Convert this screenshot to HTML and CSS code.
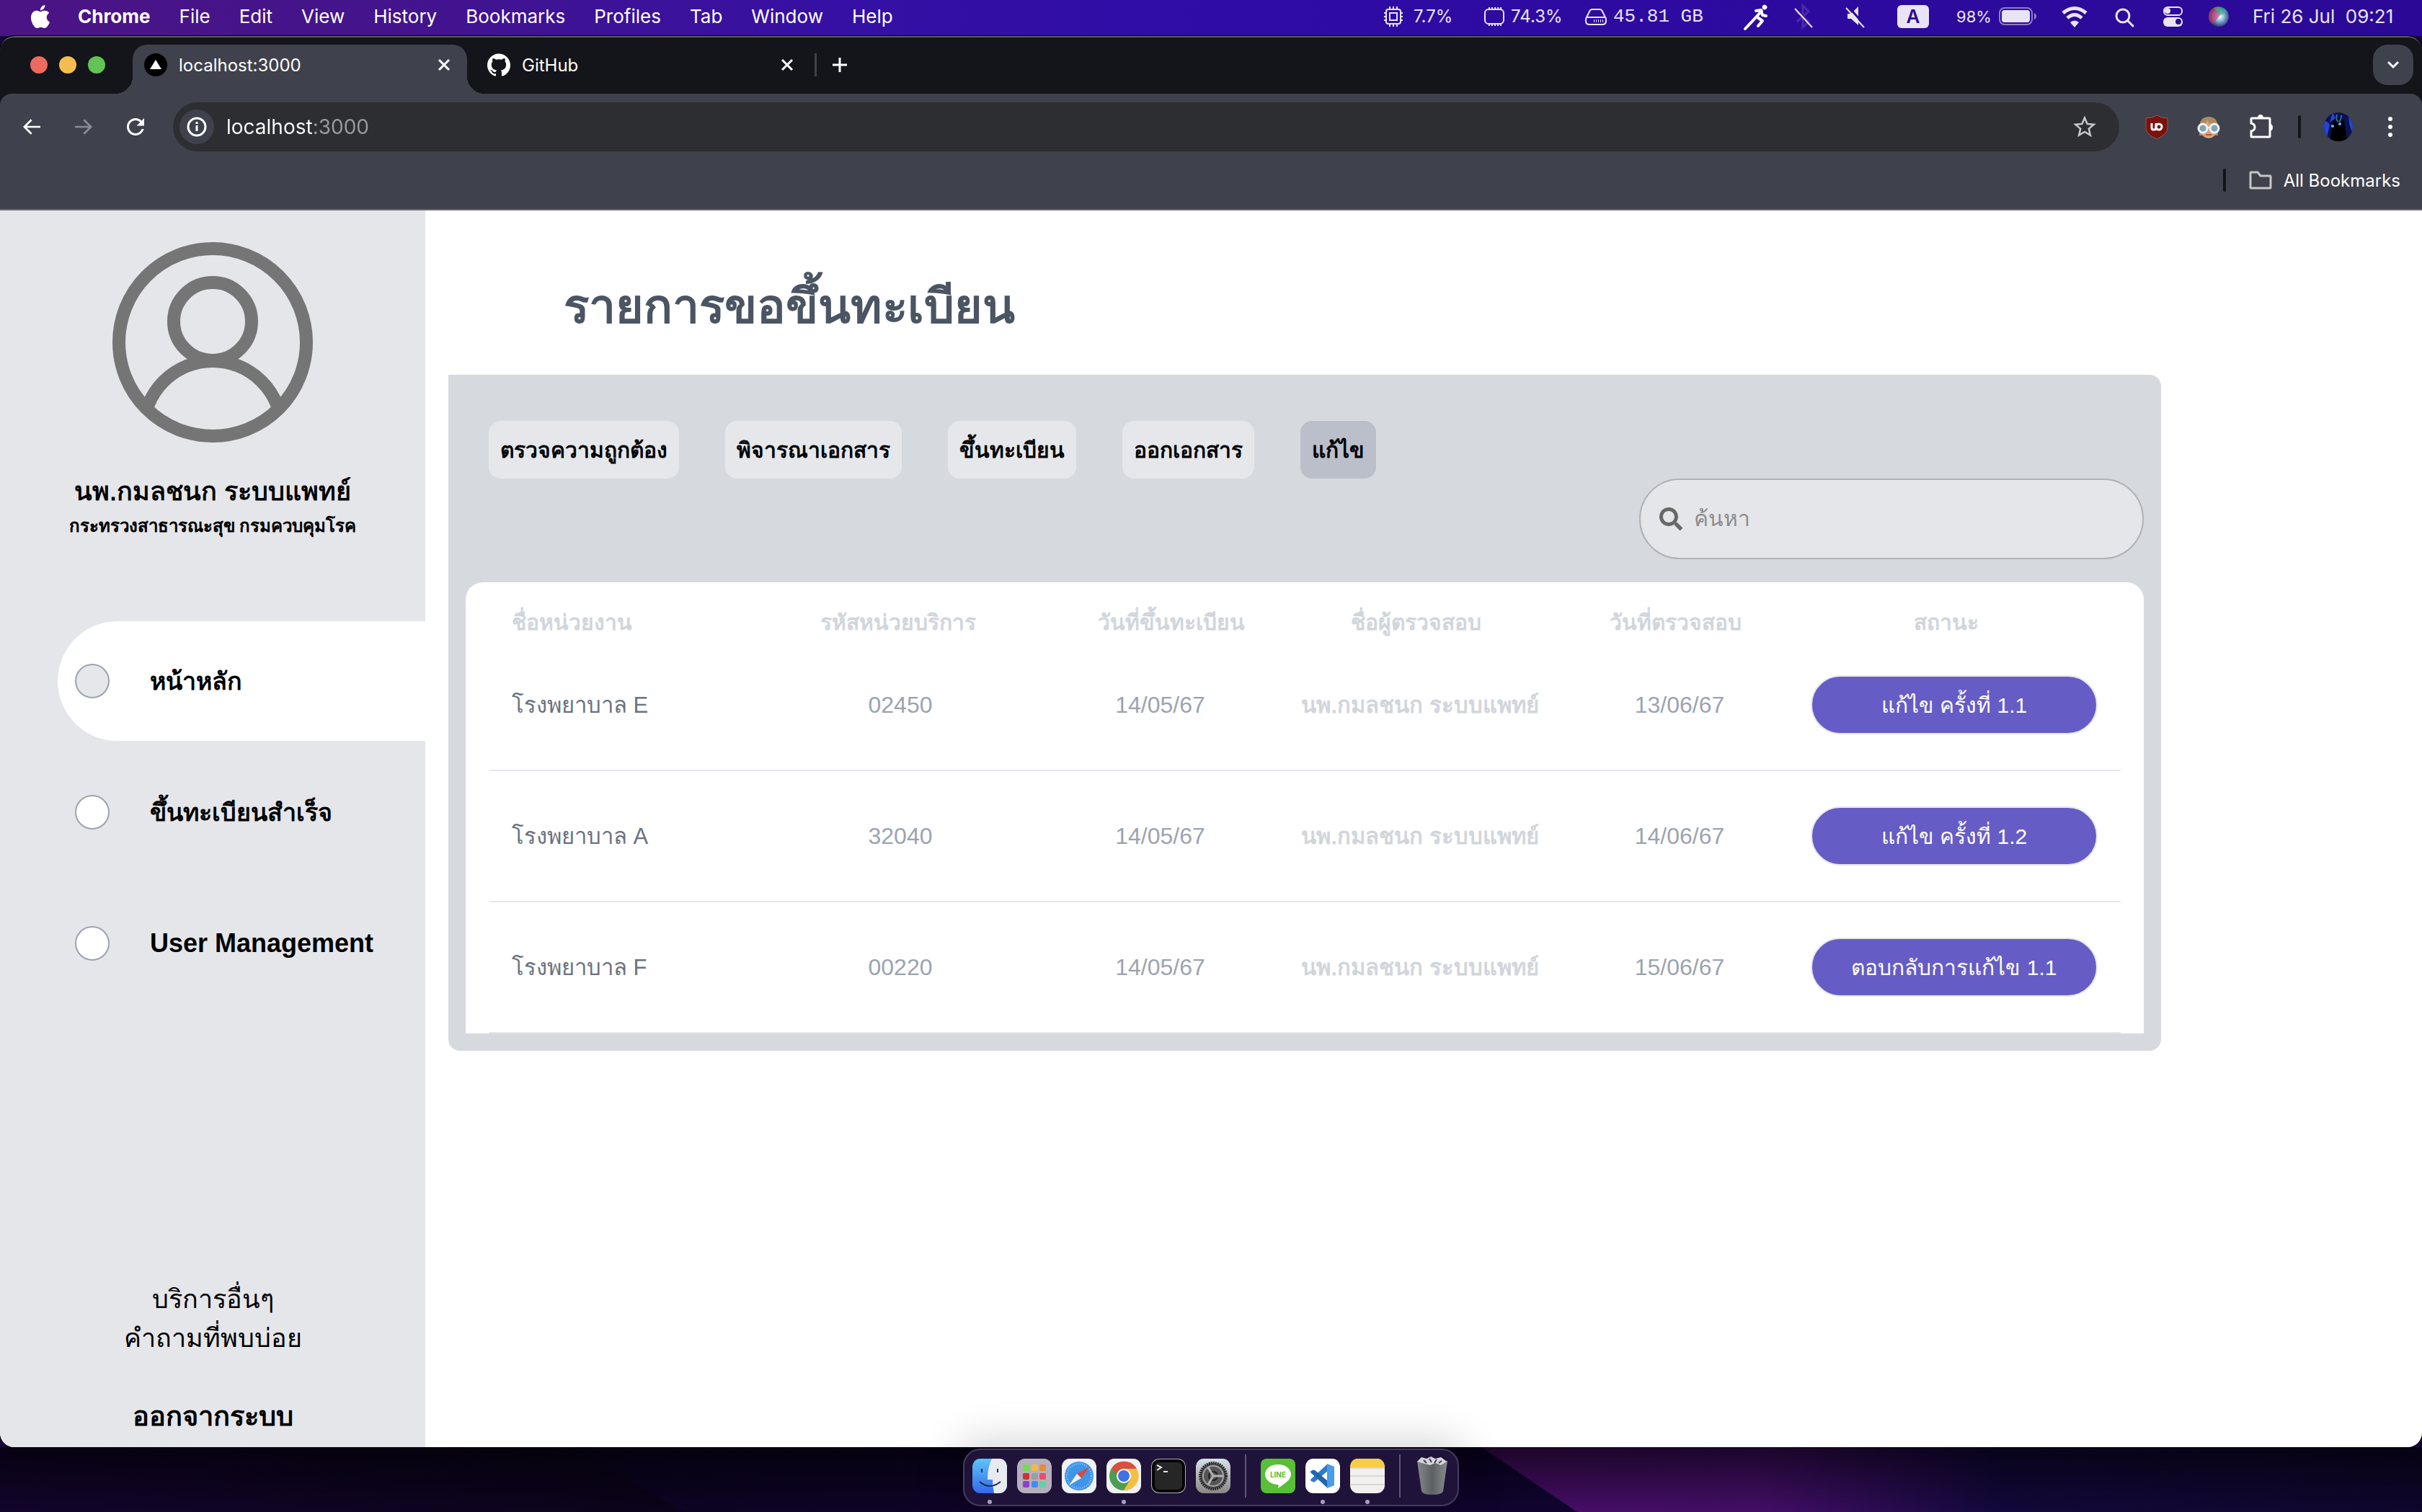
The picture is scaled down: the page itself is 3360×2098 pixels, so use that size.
FILE: index.html
```html
<!DOCTYPE html>
<html lang="th">
<head>
<meta charset="utf-8">
<title>localhost:3000</title>
<link rel="stylesheet" href="styles.css">
</head>
<body>
<div class="desktop">
  <header class="menubar">
    <svg class="apple" viewBox="0 0 24 24" fill="#fff"><path d="M12.152 6.896c-.948 0-2.415-1.078-3.96-1.04-2.04.027-3.91 1.183-4.961 3.014-2.117 3.675-.546 9.103 1.519 12.09 1.013 1.454 2.208 3.09 3.792 3.039 1.52-.065 2.09-.987 3.935-.987 1.831 0 2.35.987 3.96.948 1.637-.026 2.676-1.48 3.676-2.948 1.156-1.688 1.636-3.325 1.662-3.415-.039-.013-3.182-1.221-3.22-4.857-.026-3.04 2.48-4.494 2.597-4.559-1.429-2.09-3.623-2.324-4.39-2.376-2-.156-3.675 1.09-4.61 1.09zM15.53 3.83c.843-1.012 1.4-2.427 1.245-3.83-1.207.052-2.662.805-3.532 1.818-.78.896-1.454 2.338-1.273 3.714 1.338.104 2.715-.688 3.559-1.701"/></svg>
    <nav class="menus">
      <span class="app-name">Chrome</span><span>File</span><span>Edit</span><span>View</span><span>History</span><span>Bookmarks</span><span>Profiles</span><span>Tab</span><span>Window</span><span>Help</span>
    </nav>
    <div class="tray">
      <span class="stat stat-cpu">
        <svg width="28" height="38" viewBox="0 0 28 38" fill="none" stroke="#e9e4f5" stroke-width="2"><rect x="4" y="9" width="20" height="20" rx="3"/><rect x="9" y="14" width="10" height="10"/><path d="M9 9V5M14 9V5M19 9V5M9 33v-4M14 33v-4M19 33v-4M4 14H1M4 19H1M4 24H1M27 14h-3M27 19h-3M27 24h-3"/></svg>7.7%</span>
      <span class="stat">
        <svg width="28" height="38" viewBox="0 0 28 38" fill="none" stroke="#e9e4f5" stroke-width="2"><rect x="1" y="9" width="26" height="20" rx="5"/><path d="M7 9V6M11 9V6M15 9V6M19 9V6M23 9V6M7 32v-3M11 32v-3M15 32v-3M19 32v-3M23 32v-3"/></svg>74.3%</span>
      <span class="stat mono">
        <svg width="30" height="38" viewBox="0 0 30 38" fill="none" stroke="#e9e4f5" stroke-width="2"><path d="M2 20 6 12q1-3 4-3h10q3 0 4 3l4 8q1 1 1 3v2q0 5-5 5H6q-5 0-5-5v-2q0-2 1-3h26"/><path d="M12 25h13" stroke-width="4" stroke-dasharray="1 2"/></svg>45.81 GB</span>
      <svg width="40" height="40" viewBox="0 0 40 40" fill="none" stroke="#fff" stroke-linecap="round" stroke-linejoin="round"><circle cx="32" cy="7" r="3" fill="#fff"/><path d="M20 12l7-1 2 7 5 1M28 12l-8 9" stroke-width="4"/><path d="M20 21 5 37M22 21l7 5-6 7" stroke-width="4"/></svg>
      <svg width="40" height="40" viewBox="0 0 40 40" fill="none"><path d="M11 13l16 14-8 8V5l8 8-16 14" stroke="#4a2bab" stroke-width="3"/><path d="M8 9l24 26" stroke="#e9e4f5" stroke-width="2"/></svg>
      <svg width="40" height="40" viewBox="0 0 40 40" fill="none"><path d="M10 16h5l10-10v26l-10-9h-5z" fill="#e9e4f5"/><path d="M11 6l23 26" stroke="#2b0996" stroke-width="3"/><path d="M8 8l25 27" stroke="#e9e4f5" stroke-width="2"/></svg>
      <span class="input-source">A</span>
      <span class="battery">98%
        <svg width="52" height="26" viewBox="0 0 52 26"><rect x="1" y="1" width="45" height="23" rx="7" fill="none" stroke="#8e7cc9" stroke-width="2"/><rect x="4" y="4" width="39" height="17" rx="4" fill="#e9e4f5"/><path d="M49 8q3 1 3 4.500t-3 4.500z" fill="#8e7cc9"/></svg></span>
      <svg width="40" height="40" viewBox="0 0 40 40" fill="none" stroke="#e9e4f5" stroke-width="5"><path d="M4 15q16-13 32 0M10 22q10-9 20 0"/><path d="M14 28q6-5 12 0l-6 7z" fill="#e9e4f5" stroke="none"/></svg>
      <svg width="40" height="40" viewBox="0 0 40 40" fill="none" stroke="#e9e4f5" stroke-width="3" stroke-linecap="round"><circle cx="18" cy="19" r="9"/><path d="M25 26l7 7"/></svg>
      <svg width="40" height="40" viewBox="0 0 40 40" fill="none"><rect x="8" y="7" width="25" height="11" rx="5" stroke="#e9e4f5" stroke-width="2"/><circle cx="13" cy="12" r="4" fill="#e9e4f5"/><rect x="7" y="21" width="27" height="13" rx="6" fill="#e9e4f5"/><circle cx="28" cy="27" r="4" fill="#2b0996"/></svg>
      <svg width="40" height="40" viewBox="0 2 40 40"><defs><radialGradient id="siri" cx=".55" cy=".5"><stop offset="0" stop-color="#fff"/><stop offset=".35" stop-color="#9cc8e8"/><stop offset="1" stop-color="#2d3f78"/></radialGradient></defs><circle cx="20" cy="22" r="14" fill="url(#siri)"/><path d="M6 22a14 14 0 0 1 14-14l2 12-10 12q-6-3-6-10z" fill="#d8316a" opacity=".6"/><path d="M13 10q12-5 19 6l-10 4z" fill="#3bb98a" opacity=".6"/></svg>
      <span>Fri 26 Jul&nbsp; 09:21</span>
    </div>
  </header>

  <div class="window">
    <div class="tabstrip">
      <div class="lights"><i class="light light-close"></i><i class="light light-min"></i><i class="light light-max"></i></div>
      <div class="tab tab-active">
        <svg width="32" height="32" viewBox="0 0 32 32"><circle cx="16" cy="16" r="16" fill="#000"/><path d="M16 9l8 13H8z" fill="#fff"/></svg>
        <span class="tab-title">localhost:3000</span>
        <button class="icon-btn" aria-label="Close tab"><svg width="24" height="24" viewBox="0 0 24 24" stroke="#fff" stroke-width="3"><path d="M5 5l14 14M19 5 5 19"/></svg></button>
      </div>
      <div class="tab">
        <svg width="32" height="32" viewBox="0 0 24 24" fill="#fff"><path d="M12 .297c-6.63 0-12 5.373-12 12 0 5.303 3.438 9.8 8.205 11.385.6.113.82-.258.82-.577 0-.285-.01-1.04-.015-2.04-3.338.724-4.042-1.61-4.042-1.61C4.422 18.07 3.633 17.7 3.633 17.7c-1.087-.744.084-.729.084-.729 1.205.084 1.838 1.236 1.838 1.236 1.07 1.835 2.809 1.305 3.495.998.108-.776.417-1.305.76-1.605-2.665-.3-5.466-1.332-5.466-5.93 0-1.31.465-2.38 1.235-3.22-.135-.303-.54-1.523.105-3.176 0 0 1.005-.322 3.3 1.23.96-.267 1.98-.399 3-.405 1.02.006 2.04.138 3 .405 2.28-1.552 3.285-1.23 3.285-1.23.645 1.653.24 2.873.12 3.176.765.84 1.23 1.91 1.23 3.22 0 4.61-2.805 5.625-5.475 5.92.42.36.81 1.096.81 2.22 0 1.606-.015 2.896-.015 3.286 0 .315.21.69.825.57C20.565 22.092 24 17.592 24 12.297c0-6.627-5.373-12-12-12"/></svg>
        <span class="tab-title">GitHub</span>
        <button class="icon-btn" aria-label="Close tab"><svg width="24" height="24" viewBox="0 0 24 24" stroke="#fff" stroke-width="3"><path d="M5 5l14 14M19 5 5 19"/></svg></button>
      </div>
      <i class="tab-sep"></i>
      <button class="icon-btn new-tab" aria-label="New tab"><svg width="24" height="24" viewBox="0 0 24 24" stroke="#fff" stroke-width="3"><path d="M12 2v20M2 12h20"/></svg></button>
      <button class="icon-btn tab-search" aria-label="Search tabs"><svg width="20" height="20" viewBox="0 0 20 20" fill="none" stroke="#fff" stroke-width="3"><path d="M3 6l7 7 7-7"/></svg></button>
    </div>

    <div class="toolbar">
      <div class="navrow">
        <div class="navbtns">
          <button class="icon-btn nav-btn" aria-label="Back"><svg width="32" height="32" viewBox="0 0 24 24" fill="#fff"><path d="M21 11H6.830l5.590-5.590L11 4l-8 8 8 8 1.410-1.410L6.830 13H21z"/></svg></button>
          <button class="icon-btn nav-btn" aria-label="Forward"><svg width="32" height="32" viewBox="0 0 24 24" fill="#8b8c94"><path d="M13 4l-1.410 1.410L17.170 11H3v2h14.170l-5.580 5.590L13 20l8-8z"/></svg></button>
          <button class="icon-btn nav-btn" aria-label="Reload"><svg width="36" height="36" viewBox="0 0 24 24" fill="#fff"><path d="M17.65 6.35C16.2 4.9 14.21 4 12 4c-4.42 0-7.99 3.58-7.99 8s3.57 8 7.99 8c3.73 0 6.84-2.55 7.73-6h-2.08c-.82 2.33-3.04 4-5.65 4-3.31 0-6-2.69-6-6s2.69-6 6-6c1.66 0 3.14.69 4.22 1.78L13 11h7V4l-2.35 2.35z"/></svg></button>
        </div>
        <div class="omnibox">
          <span class="site-info"><svg width="28" height="28" viewBox="0 0 28 28" fill="none" stroke="#fff" stroke-width="3"><circle cx="14" cy="14" r="12"/><path d="M14 12v8M14 7v3"/></svg></span>
          <input class="url" type="text" value="localhost:3000" aria-label="Address">
          <svg width="38" height="38" viewBox="0 0 24 24" fill="#c7c7c7"><path d="M22 9.24l-7.19-.62L12 2 9.19 8.63 2 9.24l5.460 4.730L5.820 21 12 17.270 18.180 21l-1.630-7.030L22 9.240zM12 15.400l-3.760 2.270 1-4.280-3.320-2.880 4.380-.38L12 6.100l1.710 4.040 4.380.38-3.320 2.880 1 4.280L12 15.400z"/></svg>
        </div>
        <div class="extensions">
          <svg width="40" height="40" viewBox="0 0 40 40"><path d="M20 4q7 4 15 4v14q0 8-15 15Q5 30 5 22V8q8 0 15-4z" fill="#7d110d" stroke="#8f5a5c"/><path d="M13 15v6q0 3 3 3t3-3v-6" fill="none" stroke="#fff" stroke-width="3"/><circle cx="23" cy="20" r="4" fill="none" stroke="#fff" stroke-width="3"/></svg>
          <svg width="40" height="40" viewBox="0 0 40 40"><path d="M7 32V20Q8 6 20 6t13 14v12z" fill="#a88c60"/><path d="M9 19q8-1 9-9 3 8 13 9v6q-2 11-11 11T9 25z" fill="#d9a37a"/><g fill="#7fa4b4" stroke="#eef3f4" stroke-width="3"><circle cx="12" cy="22" r="6"/><circle cx="28" cy="22" r="6"/></g><path d="M18 21h4" stroke="#eef3f4" stroke-width="2"/><path d="M16 31h8" stroke="#a85a4a" stroke-width="2"/></svg>
          <svg width="40" height="40" viewBox="0 0 40 40"><path d="M8 8h24q1 0 1 1v24q0 1-1 1H8q-1 0-1-1v-7q5-1 5-5.500T7 15V9q0-1 1-1z" fill="none" stroke="#fff" stroke-width="3"/><path d="M16 8q0-5 4-5t4 5zM33 16q4 0 4 5t-4 4z" fill="#fff"/></svg>
          <i class="bar"></i>
          <svg width="40" height="40" viewBox="0 0 40 40"><clipPath id="pf"><circle cx="20" cy="20" r="20"/></clipPath><g clip-path="url(#pf)"><path d="M0 0h40v40H0z" fill="#0a1350"/><path d="M0 10l8 6-4 20-4 4zM34 2l6 10v18l-5-14zM12 0l4 8-8 6z" fill="#2346d8"/><path d="M12 12q8-10 16 0l4 28H8z" fill="#000"/><path d="M18 3q-2 8 2 10M24 4q0 6-3 9" fill="none" stroke="#2c6ea8" stroke-width="2"/><circle cx="12" cy="19" r="2" fill="#64b8ff"/><circle cx="22" cy="16" r="2" fill="#64b8ff"/></g></svg>
          <svg width="40" height="40" viewBox="0 0 40 40" fill="#fff"><circle cx="20" cy="9" r="3"/><circle cx="20" cy="20" r="3"/><circle cx="20" cy="31" r="3"/></svg>
        </div>
      </div>
      <div class="bookmarks">
        <i class="bar"></i>
        <svg width="32" height="32" viewBox="0 0 32 32" fill="none" stroke="#c7c7c7" stroke-width="3"><path d="M2 26V6q0-1 1-1h9l4 5h13q1 0 1 1v15q0 1-1 1H3q-1 0-1-1z"/></svg>
        <span>All Bookmarks</span>
      </div>
    </div>

    <div class="page">
      <aside class="sidebar">
        <svg class="avatar" viewBox="0 0 278 278" fill="none" stroke="#757575" stroke-width="18"><clipPath id="av"><circle cx="139" cy="139" r="130"/></clipPath><circle cx="139" cy="139" r="130"/><circle cx="139" cy="110" r="54"/><circle cx="139" cy="261" r="96" clip-path="url(#av)"/></svg>
        <p class="user-name">นพ.กมลชนก ระบบแพทย์</p>
        <p class="user-org">กระทรวงสาธารณะสุข กรมควบคุมโรค</p>
        <nav class="side-nav">
          <a class="side-link side-link-active" href="#"><i class="dot"></i>หน้าหลัก</a>
          <a class="side-link" href="#"><i class="dot"></i>ขึ้นทะเบียนสำเร็จ</a>
          <a class="side-link side-link-latin" href="#"><i class="dot"></i>User Management</a>
        </nav>
        <div class="side-foot">
          <a href="#">บริการอื่นๆ</a>
          <a href="#">คำถามที่พบบ่อย</a>
          <a class="logout" href="#">ออกจากระบบ</a>
        </div>
      </aside>
      <main class="main">
        <h1 class="title">รายการขอขึ้นทะเบียน</h1>
        <section class="panel">
          <div class="filters">
            <button class="filter">ตรวจความถูกต้อง</button>
            <button class="filter">พิจารณาเอกสาร</button>
            <button class="filter">ขึ้นทะเบียน</button>
            <button class="filter">ออกเอกสาร</button>
            <button class="filter filter-active">แก้ไข</button>
          </div>
          <label class="search">
            <svg width="32" height="32" viewBox="0 0 512 512" fill="#686868"><path d="M505 442.7L405.3 343c-4.5-4.5-10.6-7-17-7H372c27.6-35.3 44-79.7 44-128C416 93.1 322.9 0 208 0S0 93.1 0 208s93.1 208 208 208c48.3 0 92.7-16.4 128-44v16.3c0 6.4 2.5 12.5 7 17l99.7 99.7c9.4 9.4 24.6 9.4 33.9 0l28.3-28.3c9.4-9.4 9.4-24.6.1-34zM208 336c-70.7 0-128-57.200-128-128 0-70.700 57.200-128 128-128 70.700 0 128 57.200 128 128 0 70.700-57.200 128-128 128z"/></svg>
            <input class="search-input" type="text" placeholder="ค้นหา" aria-label="ค้นหา">
          </label>
          <table class="list">
            <thead>
              <tr><th>ชื่อหน่วยงาน</th><th>รหัสหน่วยบริการ</th><th>วันที่ขึ้นทะเบียน</th><th>ชื่อผู้ตรวจสอบ</th><th>วันที่ตรวจสอบ</th><th>สถานะ</th></tr>
            </thead>
            <tbody>
              <tr><td class="unit">โรงพยาบาล E</td><td>02450</td><td>14/05/67</td><td class="checker">นพ.กมลชนก ระบบแพทย์</td><td>13/06/67</td><td><button class="status">แก้ไข ครั้งที่ 1.1</button></td></tr>
              <tr><td class="unit">โรงพยาบาล A</td><td>32040</td><td>14/05/67</td><td class="checker">นพ.กมลชนก ระบบแพทย์</td><td>14/06/67</td><td><button class="status">แก้ไข ครั้งที่ 1.2</button></td></tr>
              <tr><td class="unit">โรงพยาบาล F</td><td>00220</td><td>14/05/67</td><td class="checker">นพ.กมลชนก ระบบแพทย์</td><td>15/06/67</td><td><button class="status">ตอบกลับการแก้ไข 1.1</button></td></tr>
            </tbody>
          </table>
        </section>
      </main>
    </div>
  </div>

  <footer class="dock-area">
    <svg class="wallpaper" viewBox="0 0 3360 90" preserveAspectRatio="none">
      <defs>
        <linearGradient id="w1"><stop offset="0" stop-color="#12042c"/><stop offset=".3" stop-color="#0a0318"/><stop offset="1" stop-color="#08020f"/></linearGradient>
        <linearGradient id="w2"><stop offset="0" stop-color="#0c0322"/><stop offset="1" stop-color="#14053c"/></linearGradient>
        <linearGradient id="w3"><stop offset="0" stop-color="#470d66"/><stop offset=".3" stop-color="#430e68"/><stop offset=".55" stop-color="#12083c"/><stop offset="1" stop-color="#0f062c"/></linearGradient>
        <linearGradient id="w4" x2="0" y2="1"><stop offset="0" stop-color="#000" stop-opacity=".6"/><stop offset="1" stop-color="#000" stop-opacity="0"/></linearGradient>
      </defs>
      <path d="M0 0h3360v90H0z" fill="url(#w1)"/>
      <path d="M790 0h2570v90H950z" fill="url(#w2)"/>
      <path d="M2055 0h1305v90H2188z" fill="url(#w3)"/>
      <path d="M0 0h3360v90H0z" fill="url(#w4)"/>
    </svg>
    <div class="dock">
      <span class="app running"><svg viewBox="0 0 48 48"><defs><linearGradient id="fb" x2="0" y2="1"><stop offset="0" stop-color="#5cc5f8"/><stop offset="1" stop-color="#3568ee"/></linearGradient><clipPath id="rr"><rect width="48" height="48" rx="11"/></clipPath></defs><g clip-path="url(#rr)"><path d="M0 0h48v48H0z" fill="url(#fb)"/><path d="M27 0h21v48H30q-2-9-2-19h-7Q21 12 27 0z" fill="#e8eaf0"/></g><path d="M13 14v5M35 14v5" stroke="#1d2b45" stroke-width="2"/><path d="M10 32q14 12 29 0" fill="none" stroke="#1d2b45" stroke-width="2"/></svg></span>
      <span class="app"><svg viewBox="0 0 48 48"><rect width="48" height="48" rx="11" fill="#b5afbe"/><g><rect x="8" y="8" width="9" height="9" rx="2" fill="#6fe04d"/><rect x="20" y="8" width="9" height="9" rx="2" fill="#f5b93a"/><rect x="31" y="8" width="9" height="9" rx="2" fill="#ea8a35"/><rect x="8" y="20" width="9" height="9" rx="2" fill="#d0352a"/><rect x="20" y="20" width="9" height="9" rx="2" fill="#9a9ea2"/><rect x="31" y="20" width="9" height="9" rx="2" fill="#ee4d62"/><rect x="8" y="31" width="9" height="9" rx="2" fill="#8b41cf"/><rect x="20" y="31" width="9" height="9" rx="2" fill="#3a90f0"/><rect x="31" y="31" width="9" height="9" rx="2" fill="#63cfa4"/></g></svg></span>
      <span class="app"><svg viewBox="0 0 48 48"><rect width="48" height="48" rx="11" fill="#f1f1f3"/><circle cx="24" cy="24" r="20" fill="#3f95ea"/><circle cx="24" cy="24" r="17" fill="none" stroke="#a8d2f7" stroke-width="2" stroke-dasharray="1 2"/><path d="M39 11 21 21l6 6z" fill="#e2443b"/><path d="M10 37 21 21l6 6z" fill="#f2f2f2"/></svg></span>
      <span class="app running"><svg viewBox="0 0 48 48"><rect width="48" height="48" rx="11" fill="#f1f1f3"/><circle cx="24" cy="24" r="20" fill="#4d9e51"/><path d="M24 14h18a20 20 0 0 1-18 30l9-15z" fill="#f3c044"/><path d="M7 14a20 20 0 0 1 35 0H24q-9 0-10 8z" fill="#d9503f"/><circle cx="24" cy="24" r="10" fill="#fff"/><circle cx="24" cy="24" r="8" fill="#3f72e4"/></svg></span>
      <span class="app"><svg viewBox="0 0 48 48"><rect width="48" height="48" rx="11" fill="#a7adb4"/><rect x="1" y="1" width="46" height="46" rx="10" fill="#050505"/><rect x="5" y="5" width="38" height="38" rx="6" fill="#262626"/><path d="M8 9l6 3-6 4M17 18h6" fill="none" stroke="#e6e6e6" stroke-width="2"/></svg></span>
      <span class="app"><svg viewBox="0 0 48 48" fill="none"><defs><linearGradient id="sg" x2="0" y2="1"><stop offset="0" stop-color="#d5e2ea"/><stop offset="1" stop-color="#8b8783"/></linearGradient></defs><rect width="48" height="48" rx="11" fill="url(#sg)"/><circle cx="24" cy="24" r="18" fill="#555" stroke="#2b2b2d" stroke-width="4" stroke-dasharray="2 1"/><circle cx="24" cy="24" r="14" stroke="#a0a0a0" stroke-width="2"/><circle cx="24" cy="24" r="6" stroke="#222" stroke-width="2"/><path d="M24 24h14M24 24l-7-12M24 24l-7 12" stroke="#b3b3b3" stroke-width="3"/></svg></span>
      <i class="dock-sep"></i>
      <span class="app"><svg viewBox="0 0 48 48"><rect width="48" height="48" rx="8" fill="#58bf37"/><path d="M24 8c10 0 18 6 18 14 0 7-8 12-18 19 1-4 1-5-1-5C13 35 6 29 6 22 6 14 14 8 24 8z" fill="#fff"/><text x="24" y="26" class="line-word">LINE</text></svg></span>
      <span class="app running"><svg viewBox="0 0 48 48"><rect width="48" height="48" rx="11" fill="#fff"/><path d="M31 7 8 28q-2 2 0 3l2 1q1 1 3 0l18-15z" fill="#2f7bc8"/><path d="M31 41 8 20q-2-2 0-3l2-1q1-1 3 0l18 15z" fill="#2265ab"/><path d="M30 7l10 4v26l-10 4z" fill="#4a9be8"/></svg></span>
      <span class="app running"><svg viewBox="0 0 48 48"><g clip-path="url(#rr)"><path d="M0 0h48v48H0z" fill="#f1f0ee"/><path d="M0 0h48v12H0z" fill="#f7cc46"/><path d="M0 13h48" stroke="#c9bfa0" stroke-width="1"/><path d="M0 24h48M0 36h48" stroke="#d9d8d6" stroke-width="2"/></g></svg></span>
      <i class="dock-sep"></i>
      <span class="app"><svg viewBox="0 0 48 48"><defs><linearGradient id="tg"><stop offset="0" stop-color="#85888b"/><stop offset=".5" stop-color="#5d6063"/><stop offset="1" stop-color="#8a8d90"/></linearGradient></defs><path d="M3 3h42l-6 42q-1 5-15 5T9 45z" fill="url(#tg)"/><path d="M3 4l6-6 7 2 6-3 6 3 8-2 8 6-8 5-8-3-7 3-8-2z" fill="#d5d6d8"/><path d="M12 2l4 4M20 0l3 5M30 1l-3 5M37 3l-4 3" stroke="#3a3d44" stroke-width="2"/></svg></span>
    </div>
  </footer>
</div>
</body>
</html>
```
FILE: styles.css
```css
* { box-sizing: border-box; }
body {
  margin: 0;
  font-family: "Liberation Sans", Arial, sans-serif;
  color: #000;
}
svg { display: block; flex: none; overflow: visible; }
button { border: 0; padding: 0; background: none; font: inherit; color: inherit; }
a { color: inherit; text-decoration: none; }
p, h1 { margin: 0; }

.desktop {
  display: flex;
  flex-direction: column;
  min-height: 100vh;
  background: #16073a;
}

/* macOS menu bar */
.menubar {
  display: flex;
  align-items: center;
  height: 50px;
  padding: 0 40px 4px;
  background: linear-gradient(90deg, #4b1484, #43148c 16%, #3510a4 35%, #2e0ca6 50%, #2b0996);
  color: #fff;
  font-family: Inter, sans-serif;
  font-size: 26px;
  line-height: 44px;
  white-space: nowrap;
}
.apple { width: 32px; height: 32px; margin-right: 36px; }
.menus { display: flex; gap: 40px; }
.app-name { font-weight: 700; }
.tray {
  display: grid;
  grid-template-columns: 140px 140px 217px 66px 71px 79px 82px 144px 69px 67px 64px 67px 195px;
  align-items: center;
  margin-left: auto;
  color: #e9e4f5;
}
.stat { display: flex; align-items: center; gap: 9px; font-size: 24px; }
.stat-cpu { gap: 14px; }
.mono { font-family: "Liberation Mono", monospace; font-size: 26px; }
.input-source {
  width: 44px;
  border-radius: 6px;
  background: #e9e4f5;
  color: #2b0996;
  font-size: 26px;
  font-weight: 600;
  line-height: 32px;
  text-align: center;
}
.battery { display: flex; align-items: center; gap: 10px; font-size: 22px; }

/* browser window */
.window {
  flex: 1;
  display: flex;
  flex-direction: column;
  overflow: hidden;
  border-radius: 20px;
  background: #14151a;
  box-shadow: 0 0 0 1px #000;
}
.icon-btn { display: flex; align-items: center; justify-content: center; }
.tabstrip {
  display: flex;
  height: 80px;
  padding: 10px 12px 0 42px;
  border-top: 2px solid #5c5d62;
  border-radius: 20px 20px 0 0;
  color: #fff;
  font-family: Inter, sans-serif;
  font-size: 24px;
}
.lights { display: flex; align-items: center; gap: 16px; height: 56px; margin-right: 38px; }
.light { width: 24px; height: 24px; border-radius: 50%; }
.light-close { background: #ed6a5f; }
.light-min { background: #f5bd4f; }
.light-max { background: #61c454; }
.tab {
  position: relative;
  display: flex;
  align-items: center;
  gap: 16px;
  width: 464px;
  margin-right: 12px;
  padding: 0 20px 12px 16px;
}
.tab-active { border-radius: 20px 20px 0 0; background: #3f414c; }
.tab-active::before,
.tab-active::after {
  content: "";
  position: absolute;
  bottom: 0;
  width: 24px;
  height: 24px;
}
.tab-active::before { right: 100%; background: radial-gradient(circle at 0 0, transparent 24px, #3f414c 24px); }
.tab-active::after { left: 100%; background: radial-gradient(circle at 100% 0, transparent 24px, #3f414c 24px); }
.tab-title { flex: 1; }
.tab-sep { width: 3px; height: 32px; margin: 12px 20px 0 -6px; background: #3f414c; }
.new-tab { height: 56px; }
.tab-search { width: 56px; height: 56px; margin-left: auto; border-radius: 20px; background: #3f414c; }

.toolbar {
  padding-top: 12px;
  border-bottom: 2px solid #696772;
  border-radius: 16px 16px 0 0;
  background: #3f414c;
  font-family: Inter, sans-serif;
}
.navrow { display: flex; align-items: center; padding: 0 24px 0 16px; }
.navbtns { display: flex; gap: 16px; margin-right: 24px; }
.nav-btn { width: 56px; height: 56px; }
.omnibox {
  flex: 1;
  display: flex;
  align-items: center;
  height: 68px;
  padding: 0 29px 0 9px;
  border-radius: 34px;
  background: #2d2e32;
}
.site-info {
  display: flex;
  align-items: center;
  justify-content: center;
  width: 48px;
  height: 48px;
  margin-right: 17px;
  border-radius: 50%;
  background: #3f414c;
}
.url {
  flex: 1;
  padding: 0;
  border: 0;
  background: linear-gradient(90deg, #fff 120px, #9a9b9f 120px);
  background-clip: text;
  color: transparent;
  font: 28px/40px Inter, sans-serif;
}
.extensions { display: flex; align-items: center; gap: 32px; margin-left: 32px; }
.bar { width: 4px; height: 32px; border-radius: 2px; background: #14151a; }
.bookmarks {
  display: flex;
  align-items: center;
  justify-content: flex-end;
  gap: 16px;
  height: 80px;
  padding-right: 30px;
  color: #fff;
  font-size: 24px;
}
.bookmarks .bar { margin-right: 16px; }

/* web app */
.page { flex: 1; display: flex; background: #fff; }
.sidebar {
  flex: none;
  display: flex;
  flex-direction: column;
  width: 590px;
  padding: 44px 0 16px;
  background: #e5e6ea;
}
.avatar { width: 278px; height: 278px; margin: 0 auto 40px; }
.user-name { font-size: 36px; line-height: 56px; text-align: center; -webkit-text-stroke: 1px; }
.user-org { font-size: 24px; line-height: 40px; text-align: center; -webkit-text-stroke: 1px; }
.side-nav { display: grid; gap: 16px; margin: 112px 0 0 80px; }
.side-link {
  display: flex;
  align-items: center;
  gap: 56px;
  height: 166px;
  padding-left: 24px;
  border-radius: 83px 0 0 83px;
  font-size: 34px;
  font-weight: 700;
}
.side-link-latin { font-size: 36px; }
.dot { width: 48px; height: 48px; border: 2px solid #9ca3af; border-radius: 50%; background: #fff; }
.side-link-active { background: #fff; }
.side-link-active .dot { background: #e5e7eb; }
.side-foot {
  display: grid;
  justify-items: center;
  margin-top: auto;
  font-size: 36px;
  line-height: 54px;
}
.logout { margin-top: 54px; font-size: 38px; font-weight: 700; }

.main { flex: 1; padding: 56px 362px 0 32px; }
.title {
  margin-bottom: 18px;
  padding-left: 160px;
  color: #4b5563;
  font-size: 66px;
  font-weight: 400;
  line-height: 154px;
  -webkit-text-stroke: 2px;
}
.panel {
  display: flex;
  flex-direction: column;
  padding: 64px 24px 24px;
  border-radius: 0 16px 16px 16px;
  background: #d6d9de;
}
.filters { display: flex; gap: 64px; padding-left: 32px; }
.filter {
  height: 80px;
  padding: 0 16px;
  border-radius: 16px;
  background: #e5e7eb;
  font-size: 30px;
  -webkit-text-stroke: 1px;
}
.filter-active { background: #bbbfca; }
.search {
  display: flex;
  align-items: center;
  gap: 16px;
  align-self: flex-end;
  width: 700px;
  height: 112px;
  margin-bottom: 32px;
  padding: 0 26px;
  border: 2px solid #b0b1b4;
  border-radius: 56px;
  background: #e5e6ea;
}
.search-input {
  flex: 1;
  padding: 0;
  border: 0;
  background: none;
  font: 30px/48px "Liberation Sans", Arial, sans-serif;
}
.search-input::placeholder { color: #8c8c8c; }

.list {
  display: block;
  padding: 0 32px;
  border-radius: 24px 24px 0 0;
  background: #fff;
  color: #9ca3af;
  font-size: 32px;
}
.list thead, .list tbody { display: block; }
.list tr { display: grid; align-items: center; }
.list thead tr {
  grid-template-columns: 378fr 380fr 378fr 300fr 420fr 332fr 76fr;
  height: 80px;
  padding-top: 30px;
}
.list tbody tr {
  grid-template-columns: 391fr 360fr 361fr 360fr 360fr 432fr;
  height: 182px;
  border-bottom: 2px solid #e5e7eb;
}
.list th, .list td { padding: 0; text-align: center; }
.list th { color: #d1d5db; font-size: 30px; font-weight: 400; -webkit-text-stroke: 1px; }
.list th:first-child, .list td:first-child { padding-left: 32px; text-align: left; }
.list td:last-child { padding-right: 32px; text-align: right; }
.list .unit { color: #6b7280; font-size: 31px; }
.list .checker { color: #d1d5db; font-size: 31px; -webkit-text-stroke: 1px; }
.status {
  width: 398px;
  height: 82px;
  border: 2px solid #e5e7eb;
  border-radius: 41px;
  background: #665cc5;
  color: #fff;
  font-size: 30px;
}

/* dock */
.dock-area { position: relative; display: flex; justify-content: center; height: 90px; padding-top: 2px; }
.wallpaper { position: absolute; inset: 0; width: 100%; height: 100%; }
.dock {
  position: relative;
  display: flex;
  align-items: center;
  gap: 14px;
  height: 80px;
  padding: 0 11px 5px;
  border: 2px solid #463a62;
  border-radius: 24px;
  background: #201339;
  box-shadow: 0 0 56px 12px rgba(0, 0, 0, .16);
}
.app { position: relative; width: 48px; height: 48px; }
.running::after {
  content: "";
  position: absolute;
  top: 57px;
  left: 21px;
  width: 6px;
  height: 6px;
  border-radius: 50%;
  background: #a89cc4;
}
.dock-sep { width: 2px; height: 60px; margin: 0 6px; background: #5f5379; }
.line-word { fill: #58bf37; font: 700 10px Inter, sans-serif; text-anchor: middle; }
```
